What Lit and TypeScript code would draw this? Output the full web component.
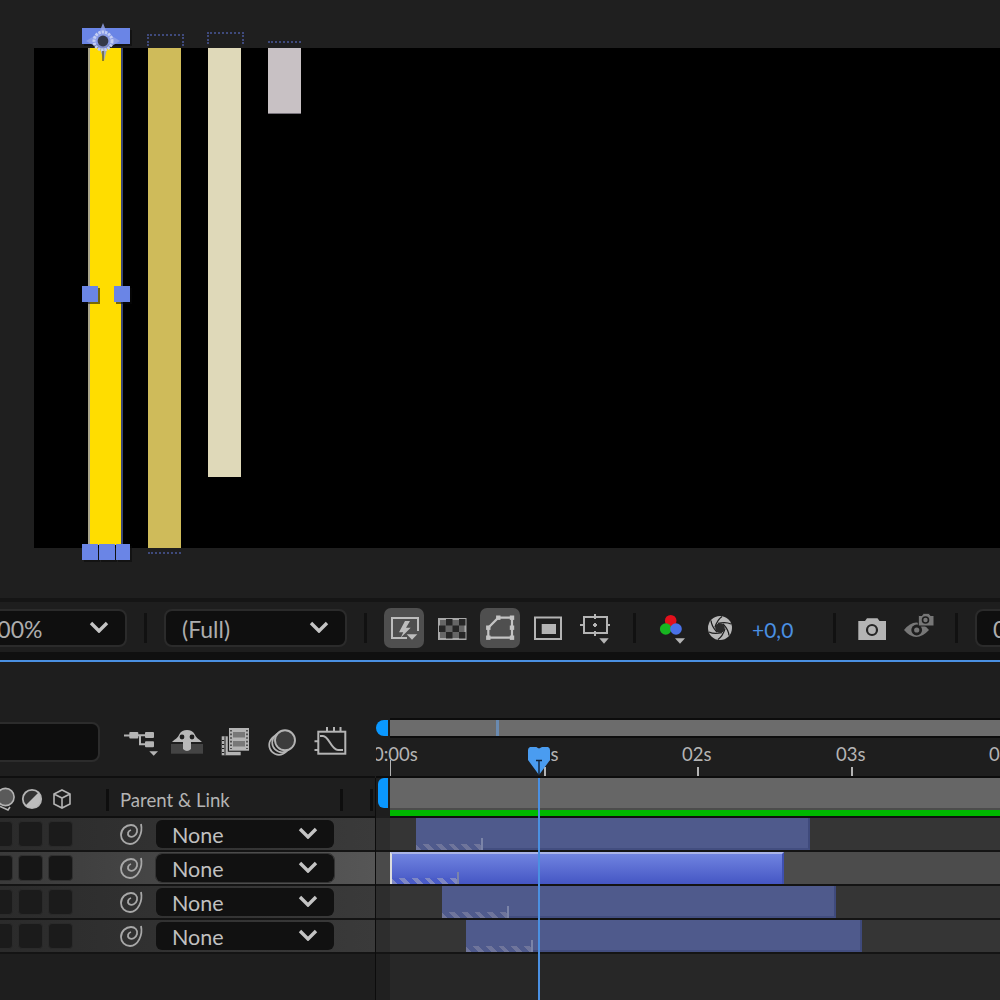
import { LitElement, html, svg, css } from "lit";
import { customElement } from "lit/decorators.js";

const chevron = html`<svg class="chev" viewBox="0 0 20 12"><polyline points="2,2 10,10 18,2"></polyline></svg>`;

const spiral = html`<svg class="spiral" viewBox="0 0 24 24"><path d="M21 2C23 11 18 22 10 22C5 22 1 18 1 13C1 7 6 3 11 3C15 3 18 6 17 10C16 14 12 16 9 14C7 12 8 9 11 8"></path></svg>`;

const checkCells = [
  [14, 11], [27, 11], [7, 17.5], [20.5, 17.5], [14, 24], [27, 24],
];

const iconBolt = svg`
  <path d="M34 23V10H8V30H23" fill="none" stroke="#bdbdbd" stroke-width="2"></path>
  <polygon points="21,13 15,24.3 19.3,24.3 16.7,29.7 26.7,19.7 22,19.7 26,13" fill="#bdbdbd"></polygon>
  <polygon points="22.7,26.3 33.3,26.3 28,31.7" fill="#bdbdbd"></polygon>`;

const iconChecker = svg`
  <rect x="7" y="11" width="26.5" height="20" fill="#666" stroke="#a8a8a8" stroke-width="2"></rect>
  ${checkCells.map(([x, y]) => svg`<rect x=${x} y=${y} width="6.5" height="6.5" fill="#262626"></rect>`)}`;

const maskPts = [[8.3, 29.7], [8.3, 19.7], [18.3, 9.7], [32, 9.7], [32, 19.7], [32, 29.7]];
const iconMask = svg`
  <polygon points="8.3,29.7 8.3,19.7 18.3,9.7 32,9.7 32,29.7" fill="none" stroke="#c4c4c4" stroke-width="2.2"></polygon>
  ${maskPts.map(([x, y]) => svg`<rect x=${x - 2.2} y=${y - 2.2} width="4.4" height="4.4" fill="#c4c4c4"></rect>`)}`;

const iconSafe = svg`
  <rect x="7" y="9.5" width="26" height="21.5" fill="none" stroke="#b4b4b4" stroke-width="2"></rect>
  <rect x="13.7" y="16" width="14.3" height="10" fill="#b4b4b4"></rect>`;

const iconCrop = svg`
  <g stroke="#b4b4b4" stroke-width="2" fill="none">
    <rect x="8" y="9" width="23" height="16"></rect>
    <path d="M19 6V11M19 23V28M4 17H9M30 17H34M17 17H21M19 15V19"></path>
  </g>
  <polygon points="23.3,30.3 32.7,30.3 28,35.7" fill="#b4b4b4"></polygon>`;

const iconRgb = svg`
  <circle cx="20.7" cy="12.7" r="5.8" fill="#e3101c"></circle>
  <circle cx="15.7" cy="21" r="5.8" fill="#17b520"></circle>
  <circle cx="26" cy="21" r="5.8" fill="#4a72e8"></circle>
  <polygon points="25,30.3 35,30.3 30,35.7" fill="#b4b4b4"></polygon>`;

const iconAperture = svg`
  <circle cx="20" cy="20" r="12" fill="#b8b8b8"></circle>
  ${[0, 60, 120, 180, 240, 300].map(
    (a) => svg`<path d="M18 15.3Q26 13.5 31 16" fill="none" stroke="#1e1e1e" stroke-width="1.3" transform="rotate(${a} 20 20)"></path>`
  )}
  <circle cx="20" cy="20" r="4.8" fill="#2a2a2a"></circle>`;

const iconCamera = svg`
  <path d="M5.3 13H12L14 10.3H24.5L26.5 13H33V32H5.3Z" fill="#b4b4b4"></path>
  <circle cx="19" cy="22" r="5" fill="#b4b4b4" stroke="#262626" stroke-width="2.2"></circle>`;

const iconEye = svg`
  <path d="M4 22Q16 7 29 22Q16 36 4 22Z" fill="#777"></path>
  <circle cx="16.7" cy="22" r="5.4" fill="#1e1e1e"></circle>
  <circle cx="16.7" cy="22" r="2.6" fill="#777"></circle>
  <path d="M18.3 18V7.5H22L23.5 5.3H29L30.5 7.5H34V18Z" fill="#777" stroke="#1e1e1e" stroke-width="1"></path>
  <circle cx="25.5" cy="12" r="3" fill="#777" stroke="#1e1e1e" stroke-width="1.6"></circle>`;

const iconTree = svg`
  <g fill="#b4b4b4">
    <rect x="5" y="12.5" width="6" height="2"></rect>
    <rect x="10.3" y="10" width="9" height="6.6" rx="1"></rect>
    <rect x="26" y="10" width="9" height="6" rx="1"></rect>
    <rect x="26" y="19.3" width="9" height="6" rx="1"></rect>
    <polygon points="30.3,29.3 39,29.3 34.7,33.7"></polygon>
  </g>
  <path d="M19 13.3H26M21 13.3V22.3H26" fill="none" stroke="#b4b4b4" stroke-width="2"></path>`;

const iconShy = svg`
  <rect x="4" y="22" width="32" height="9.7" fill="#444"></rect>
  <path d="M5 20C8 17 11 16 12.5 12C15 6.5 25 6.5 27.5 12C29 16 32 17 35 20H24V27Q20 31 16 27V20Z" fill="#b8b8b8"></path>
  <circle cx="15" cy="15" r="2.4" fill="#1e1e1e"></circle>
  <circle cx="25" cy="15" r="2.4" fill="#1e1e1e"></circle>`;

const iconFilm = svg`
  <rect x="6.7" y="14.3" width="19" height="19" fill="#b4b4b4"></rect>
  <rect x="9.5" y="14.3" width="1" height="19" fill="#1e1e1e"></rect>
  <path d="M7 18.5H9.2M7 22.5H9.2M7 26.5H9.2M7 30.5H9.2" stroke="#1e1e1e" stroke-width="1"></path>
  <rect x="12.8" y="4.8" width="22.4" height="25" fill="#1e1e1e"></rect>
  <rect x="14" y="6" width="20" height="22.7" fill="#b4b4b4"></rect>
  <rect x="18" y="10" width="12" height="5.5" fill="#787878"></rect>
  <rect x="18" y="19" width="12" height="5.5" fill="#787878"></rect>
  <path d="M16 8V27M32 8V27" stroke="#3a3a3a" stroke-width="1.6" stroke-dasharray="1.6 2"></path>`;

const iconBlend = svg`
  <g fill="#1e1e1e" stroke="#b4b4b4" stroke-width="1.7">
    <circle cx="16" cy="23" r="9.8"></circle>
    <circle cx="19" cy="20.5" r="9.8"></circle>
  </g>
  <circle cx="22" cy="18.3" r="10" fill="#3c3c3c" stroke="#b4b4b4" stroke-width="1.9"></circle>`;

const iconGraph = svg`
  <rect x="7.3" y="9.7" width="27" height="22" fill="none" stroke="#b4b4b4" stroke-width="2"></rect>
  <path d="M16 5V9M23 5V9M29.5 5V9M3.5 19.3H7M3.5 28H7" stroke="#b4b4b4" stroke-width="2" fill="none"></path>
  <path d="M9 14H12C18 14 20 28 27 28H32" fill="none" stroke="#b4b4b4" stroke-width="2"></path>`;

// time axis, x measured from the left of the track pane
const ruler = [
  { label: "0:00s", left: -3, tick: 14, tall: true },
  { label: "01s", left: 153, tick: 168, tall: false },
  { label: "02s", left: 306, tick: 321, tall: false },
  { label: "03s", left: 460, tick: 475, tall: false },
  { label: "04s", left: 613, tick: 629, tall: false },
];

const layers = [
  { start: 40, width: 394, selected: false },
  { start: 14, width: 394, selected: true },
  { start: 66, width: 394, selected: false },
  { start: 90, width: 396, selected: false },
];

const shapes = [
  { left: 114, height: 500, color: "#cfbb5a", top: 14, topOn: true, bottom: true },
  { left: 174, height: 429, color: "#dfd9b9", top: 16, topOn: true, bottom: false },
  { left: 234, height: 66, color: "#c8c1c4", top: 7, topOn: false, bottom: false },
];

@customElement("app-root")
export class AppRoot extends LitElement {
  static styles = css`
    :host {
      display: block;
      font-family: "Lato", "Noto Sans", sans-serif;
      color: #b4b4b4;
    }
    .app {
      width: 1000px;
      height: 1000px;
      overflow: hidden;
      display: flex;
      flex-direction: column;
      background: #1e1e1e;
    }

    .viewer {
      height: 598px;
      flex: none;
      box-sizing: border-box;
      padding: 48px 0 50px 34px;
      background: #1f1f1f;
    }
    .comp {
      position: relative;
      height: 500px;
      background: #000;
    }
    .layer-shape {
      position: absolute;
      top: 0;
      width: 33px;
      box-sizing: border-box;
    }
    .layer-shape.gray-foot {
      border-bottom: 1px solid #77727a;
    }
    .outline {
      position: absolute;
      width: 33px;
      border-top: 2px dotted #3f4a7c;
    }
    .outline.open {
      height: 10px;
      border-left: 2px dotted #3f4a7c;
      border-right: 2px dotted #3f4a7c;
    }
    .foot {
      position: absolute;
      width: 33px;
      border-top: 2px dotted #3f4a7c;
    }
    .selected-shape {
      position: absolute;
      left: 54px;
      top: 0;
      width: 31px;
      height: 497px;
      background: #ffdd00;
      border-left: 2px solid #a8a48a;
      border-right: 2px solid #3a4570;
    }
    .handle {
      position: absolute;
      background: #6a85e6;
      box-shadow: 2px 2px 0 rgba(10, 10, 10, 0.55);
    }
    .handle.top {
      left: 48px;
      top: -20px;
      width: 48px;
      height: 16px;
    }
    .handle.mid {
      top: 238px;
      width: 16px;
      height: 16px;
    }
    .handle.mid.a {
      left: 48px;
    }
    .handle.mid.b {
      left: 80px;
    }
    .handle.low {
      top: 496px;
      height: 16px;
    }
    .handle.low.a {
      left: 48px;
      width: 16px;
    }
    .handle.low.b {
      left: 65px;
      width: 16px;
    }
    .handle.low.c {
      left: 82px;
      width: 14px;
    }
    .anchor {
      position: absolute;
      left: 49px;
      top: -25px;
      width: 40px;
      height: 40px;
    }

    .strip {
      flex: none;
      height: 4px;
      background: #151515;
    }
    .toolbar {
      flex: none;
      height: 50px;
      box-sizing: border-box;
      padding-top: 2px;
      display: flex;
      align-items: center;
      gap: 17px;
      background: #1e1e1e;
    }
    .dropdown {
      flex: none;
      box-sizing: border-box;
      height: 38px;
      display: flex;
      align-items: center;
      justify-content: space-between;
      padding: 0 16px;
      background: #0f0f0f;
      border: 2px solid #2b2b2b;
      border-radius: 8px;
      font-size: 23px;
      color: #adadad;
    }
    .dropdown span {
      margin-top: 2px;
    }
    .dropdown.zoom {
      width: 159px;
      margin-left: -32px;
      padding-left: 14px;
    }
    .dropdown.res {
      width: 183px;
    }
    .dropdown.last {
      width: 120px;
    }
    .chev {
      width: 20px;
      height: 12px;
      flex: none;
      margin-top: -2px;
    }
    .chev polyline {
      fill: none;
      stroke: #c4c4c4;
      stroke-width: 3.4;
    }
    .sep {
      flex: none;
      width: 3px;
      height: 30px;
      background: #111;
    }
    .group {
      display: flex;
      align-items: center;
      gap: 8px;
    }
    .group.color {
      gap: 10px;
      margin-left: -3px;
    }
    .group.snap {
      gap: 9px;
    }
    .tool {
      width: 40px;
      height: 40px;
      display: block;
      flex: none;
      border-radius: 7px;
    }
    .tool.on {
      background: #4f4f4f;
    }
    .tool.narrow {
      width: 38px;
    }
    .exposure {
      width: 64px;
      margin: 3px 0 0 2px;
      color: #4a90e2;
      font-size: 21px;
      flex: none;
    }

    .under {
      flex: none;
      height: 8px;
      background: #101010;
    }
    .blue-rule {
      flex: none;
      height: 2px;
      background: #4a90e2;
    }

    .timeline {
      flex: 1;
      display: flex;
      min-height: 0;
    }
    .left {
      flex: none;
      width: 375px;
      display: flex;
      flex-direction: column;
      overflow: hidden;
    }
    .controls {
      flex: none;
      height: 116px;
      box-sizing: border-box;
      padding: 60px 0 0;
      display: flex;
      gap: 8px;
      border-bottom: 2px solid #0f0f0f;
    }
    .search {
      flex: none;
      box-sizing: border-box;
      width: 130px;
      height: 40px;
      margin-left: -30px;
      margin-right: 11px;
      background: #0e0e0e;
      border: 2px solid #2c2c2c;
      border-radius: 8px;
    }
    .controls svg {
      width: 40px;
      height: 40px;
      flex: none;
    }
    .header {
      flex: none;
      height: 40px;
      box-sizing: border-box;
      display: flex;
      align-items: center;
      border-bottom: 2px solid #0f0f0f;
    }
    .header svg {
      flex: none;
      display: block;
      width: 80px;
      height: 30px;
      margin-top: 2px;
    }
    .head-gap {
      flex: none;
      width: 26px;
    }
    .head-gap.b {
      width: 27px;
    }
    .head-sep {
      flex: none;
      width: 3px;
      height: 22px;
      margin-top: 6px;
      background: #0e0e0e;
    }
    .parent {
      flex: none;
      width: 231px;
      padding-left: 11px;
      box-sizing: border-box;
      margin-top: 5px;
      font-size: 18.6px;
    }
    .row {
      flex: none;
      height: 32px;
      display: flex;
      align-items: center;
      border-bottom: 2px solid #141414;
      background: linear-gradient(90deg, #2b2b2b, #3a3a3a);
    }
    .row.selected {
      background: linear-gradient(90deg, #3a3a3a, #565656);
    }
    .switches {
      flex: none;
      display: flex;
      gap: 5px;
      margin-left: -12px;
    }
    .switch {
      width: 25px;
      height: 26px;
      box-sizing: border-box;
      background: #1b1b1b;
      border: 1px solid #2a2a2a;
      border-radius: 4px;
    }
    .row.selected .switch {
      background: #161616;
      border-color: #303030;
    }
    .spiral {
      flex: none;
      width: 24px;
      height: 24px;
      margin-left: 47px;
      fill: none;
      stroke: #a8a8a8;
      stroke-width: 1.8;
    }
    .parent-select {
      flex: none;
      box-sizing: border-box;
      width: 178px;
      height: 28px;
      margin-left: 12px;
      padding: 0 16px;
      display: flex;
      align-items: center;
      justify-content: space-between;
      background: #111;
      border-radius: 6px;
      font-size: 21.5px;
      color: #c0c0c0;
    }
    .parent-select span {
      margin-top: 2px;
    }
    .row.selected .parent-select {
      outline: 1px solid #333;
    }

    .right {
      position: relative;
      flex: 1;
      min-width: 0;
      display: flex;
      flex-direction: column;
      overflow: hidden;
    }
    .right-top {
      flex: none;
      height: 56px;
    }
    .scroll {
      position: relative;
      flex: none;
      height: 16px;
      margin-left: 14px;
      background: #6c6c6c;
      border-top: 2px solid #0c0c0c;
      border-bottom: 2px solid #0c0c0c;
    }
    .scroll-mark {
      position: absolute;
      left: 106px;
      top: 0;
      width: 3px;
      height: 16px;
      background: #6a8ab0;
    }
    .knob {
      position: absolute;
      background: #0a98ff;
    }
    .knob.scroll-knob {
      left: 0;
      top: 58px;
      width: 12px;
      height: 16px;
      border-radius: 8px 0 0 8px;
    }
    .knob.work-knob {
      left: 2px;
      top: 116px;
      width: 10px;
      height: 30px;
      border-radius: 6px 0 0 6px;
    }
    .ruler {
      position: relative;
      flex: none;
      height: 40px;
      box-sizing: border-box;
      border-bottom: 2px solid #0c0c0c;
      font-size: 18.5px;
    }
    .ruler span {
      position: absolute;
      top: 5px;
    }
    .ruler i {
      position: absolute;
      bottom: 0;
      width: 2px;
      height: 9px;
      background: #b4b4b4;
    }
    .ruler i.tall {
      height: 16px;
      width: 1px;
    }
    .work {
      flex: none;
      height: 32px;
      margin-left: 14px;
      box-sizing: border-box;
      background: #666;
      border-bottom: 2px solid #4c4c4c;
    }
    .green {
      flex: none;
      height: 8px;
      margin-left: 14px;
      box-sizing: border-box;
      background: #00b800;
      border-bottom: 2px solid #111;
    }
    .track {
      flex: none;
      height: 32px;
      display: flex;
      border-bottom: 2px solid #141414;
      background: linear-gradient(90deg, #2d2d2d 14px, #353535 14px);
    }
    .track.selected {
      background: linear-gradient(90deg, #4a4a4a 14px, #4c4c4c 14px);
    }
    .clip {
      position: relative;
      flex: none;
      box-sizing: border-box;
      height: 32px;
      background: #4f5a8c;
      border-right: 2px solid #3f4a7c;
      border-bottom: 2px solid #434e80;
    }
    .clip.selected {
      background: linear-gradient(180deg, #7083e0, #4556c4);
      border-top: 2px solid #aab4e8;
      border-left: 2px solid #ddd;
      border-right: 2px solid #3f50b0;
      border-bottom: none;
    }
    .hatch {
      position: absolute;
      left: 0;
      bottom: -2px;
      width: 65px;
      height: 6px;
      background: repeating-linear-gradient(45deg, #6f759b 0 4px, #4f5a8c 4px 9px);
    }
    .clip.selected .hatch {
      bottom: 0;
      background: repeating-linear-gradient(45deg, #7f88c4 0 4px, #4a5cc8 4px 9px);
    }
    .hatch::after {
      content: "";
      position: absolute;
      right: -2px;
      bottom: 0;
      width: 2px;
      height: 12px;
      background: #7b84a8;
    }
    .track-foot {
      flex: 1;
      background: linear-gradient(90deg, #202020 14px, #272727 14px);
    }
    .divider {
      flex: 1;
      width: 1px;
      background: #0c0c0c;
    }
    .divider-wrap {
      flex: none;
      display: flex;
      flex-direction: column;
      width: 1px;
    }
    .divider-gap {
      flex: none;
      height: 116px;
    }
    .playhead-line {
      position: absolute;
      left: 162px;
      top: 116px;
      bottom: 0;
      width: 2px;
      background: #4a90e2;
    }
    .playhead {
      position: absolute;
      left: 152px;
      top: 85px;
      width: 22px;
      height: 29px;
    }
  `;

  render() {
    return html`
      <div class="app">
        <div class="viewer">
          <div class="comp">
            <div class="selected-shape"></div>
            ${shapes.map(
              (s) => html`
                <div
                  class="layer-shape ${s.height < 100 ? "gray-foot" : ""}"
                  style="left:${s.left}px;height:${s.height}px;background:${s.color}"
                ></div>
                <div
                  class="outline ${s.topOn ? "open" : ""}"
                  style="left:${s.left - (s.topOn ? 1 : 0)}px;top:-${s.top}px"
                ></div>
                ${s.bottom ? html`<div class="foot" style="left:${s.left}px;top:504px"></div>` : ""}
              `
            )}
            <div class="handle top"></div>
            <div class="handle mid a"></div>
            <div class="handle mid b"></div>
            <div class="handle low a"></div>
            <div class="handle low b"></div>
            <div class="handle low c"></div>
            <svg class="anchor" viewBox="0 0 40 40">
              <polygon points="20,0 24,10 37,18 24,26 21,38 17,26 3,18 16,10" fill="#8fa0e6" opacity="0.85"></polygon>
              <circle cx="20" cy="18" r="9" fill="none" stroke="#c3cdf3" stroke-width="3" stroke-dasharray="2.4 1"></circle>
              <circle cx="20" cy="18" r="5.4" fill="#343848"></circle>
              <path d="M20 28V38" stroke="#6a6230" stroke-width="1.5"></path>
            </svg>
          </div>
        </div>

        <div class="strip"></div>
        <div class="toolbar">
          <div class="dropdown zoom"><span>100%</span>${chevron}</div>
          <div class="sep"></div>
          <div class="dropdown res"><span>(Full)</span>${chevron}</div>
          <div class="sep"></div>
          <div class="group">
            <svg class="tool on" viewBox="0 0 40 40">${iconBolt}</svg>
            <svg class="tool" viewBox="0 0 40 40">${iconChecker}</svg>
            <svg class="tool on" viewBox="0 0 40 40">${iconMask}</svg>
            <svg class="tool" viewBox="0 0 40 40">${iconSafe}</svg>
            <svg class="tool" viewBox="0 0 40 40">${iconCrop}</svg>
          </div>
          <div class="sep"></div>
          <div class="group color">
            <svg class="tool" viewBox="0 0 40 40">${iconRgb}</svg>
            <svg class="tool" viewBox="0 0 40 40">${iconAperture}</svg>
            <div class="exposure">+0,0</div>
          </div>
          <div class="sep"></div>
          <div class="group snap">
            <svg class="tool narrow" viewBox="0 0 38 40">${iconCamera}</svg>
            <svg class="tool narrow" viewBox="0 0 38 40">${iconEye}</svg>
          </div>
          <div class="sep"></div>
          <div class="dropdown last"><span>0</span></div>
        </div>
        <div class="under"></div>
        <div class="blue-rule"></div>

        <div class="timeline">
          <div class="left">
            <div class="controls">
              <div class="search"></div>
              <svg viewBox="0 0 40 40">${iconTree}</svg>
              <svg viewBox="0 0 40 40">${iconShy}</svg>
              <svg viewBox="0 0 40 40">${iconFilm}</svg>
              <svg viewBox="0 0 40 40">${iconBlend}</svg>
              <svg viewBox="0 0 40 40">${iconGraph}</svg>
            </div>
            <div class="header">
              <svg viewBox="0 0 80 30">
                <path d="M-3 22L8 27L10 24" fill="none" stroke="#b4b4b4" stroke-width="1.6"></path>
                <circle cx="5.5" cy="14" r="8.6" fill="#5a5a5a" stroke="#b4b4b4" stroke-width="1.6"></circle>
                <circle cx="32" cy="16" r="9.2" fill="#333" stroke="#b4b4b4" stroke-width="1.8"></circle>
                <path d="M38.5 9.5A9.2 9.2 0 0 1 25.5 22.5Z" fill="#bdbdbd"></path>
                <path d="M62 7L70 11V21L62 25L54 21V11ZM54 11L62 15L70 11M62 15V25" fill="none" stroke="#b4b4b4" stroke-width="1.6"></path>
              </svg>
              <div class="head-gap"></div>
              <div class="head-sep"></div>
              <div class="parent">Parent &amp; Link</div>
              <div class="head-sep"></div>
              <div class="head-gap b"></div>
              <div class="head-sep"></div>
            </div>
            ${layers.map(
              (l) => html`
                <div class="row ${l.selected ? "selected" : ""}">
                  <div class="switches">
                    <div class="switch"></div>
                    <div class="switch"></div>
                    <div class="switch"></div>
                  </div>
                  ${spiral}
                  <div class="parent-select"><span>None</span>${chevron}</div>
                </div>
              `
            )}
          </div>

          <div class="divider-wrap">
            <div class="divider-gap"></div>
            <div class="divider"></div>
          </div>

          <div class="right">
            <div class="right-top"></div>
            <div class="scroll"><div class="scroll-mark"></div></div>
            <div class="ruler">
              ${ruler.map(
                (r) => html`
                  <span style="left:${r.left}px">${r.label}</span>
                  <i class="${r.tall ? "tall" : ""}" style="left:${r.tick}px"></i>
                `
              )}
            </div>
            <div class="work"></div>
            <div class="green"></div>
            ${layers.map(
              (l) => html`
                <div class="track ${l.selected ? "selected" : ""}">
                  <div class="clip ${l.selected ? "selected" : ""}" style="margin-left:${l.start}px;width:${l.width}px">
                    <div class="hatch"></div>
                  </div>
                </div>
              `
            )}
            <div class="track-foot"></div>
            <div class="knob scroll-knob"></div>
            <div class="knob work-knob"></div>
            <div class="playhead-line"></div>
            <svg class="playhead" viewBox="0 0 22 29">
              <path d="M0 3Q0 1 2 0H8L11 1.5L14 0H20Q22 1 22 3V13L11 28L0 13Z" fill="#4a9cf0"></path>
              <path d="M8 13.5H14M11 13.5V28" stroke="#10233a" stroke-width="1.4"></path>
            </svg>
          </div>
        </div>
      </div>
    `;
  }
}
